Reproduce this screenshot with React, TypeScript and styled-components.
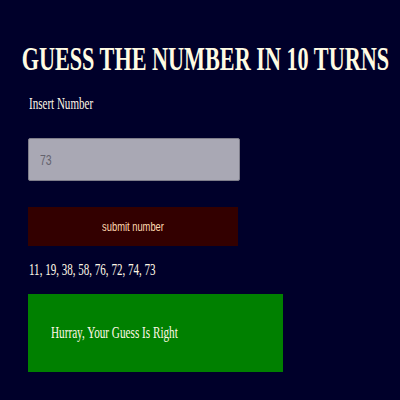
import React from 'react';
import styled, { createGlobalStyle } from 'styled-components';

const GlobalStyle = createGlobalStyle`
  html, body {
    margin: 0;
    padding: 0;
    background: #00002a;
  }
  body {
    font-family: "Liberation Serif", "Times New Roman", serif;
    color: #fff8e6;
  }
`;

const Page = styled.div`
  width: 400px;
  height: 400px;
  box-sizing: border-box;
  padding: 44px 0 0 28px;
  display: flex;
  flex-direction: column;
  overflow: hidden;
`;

// the page is drawn horizontally squeezed, so text is narrowed with scaleX
const Squeeze = styled.span<{ $x: number; $origin?: string }>`
  display: inline-block;
  flex: none;
  white-space: nowrap;
  transform: scaleX(${p => p.$x});
  transform-origin: ${p => p.$origin || 'left'} center;
`;

const Title = styled.h1`
  margin: 0 0 0 -23px;
  width: 400px;
  display: flex;
  justify-content: center;
  font-size: 34px;
  line-height: 30px;
  font-weight: bold;
  color: #fffbe3;
`;

const Label = styled.div`
  margin-top: 21px;
  font-size: 16px;
  line-height: 18px;
  padding-left: 1px;
`;

const Input = styled.div`
  margin-top: 25px;
  width: 212px;
  height: 43px;
  box-sizing: border-box;
  background: #a9a8b4;
  border: 1px solid #7e7d8a;
  border-radius: 2px;
  padding-left: 11px;
  display: flex;
  align-items: center;
  font-family: "Liberation Sans", Arial, sans-serif;
  font-size: 14px;
  color: #64636e;
`;

const Button = styled.div`
  margin-top: 26px;
  width: 210px;
  height: 39px;
  background: #330000;
  display: flex;
  align-items: center;
  justify-content: center;
  font-family: "Liberation Sans", Arial, sans-serif;
  font-size: 13px;
  color: #ffd9b0;
`;

const Guesses = styled.div`
  margin-top: 15px;
  font-size: 16px;
  line-height: 18px;
  padding-left: 1px;
`;

const Result = styled.div<{ $ok: boolean }>`
  margin-top: 15px;
  width: 255px;
  height: 78px;
  box-sizing: border-box;
  background: ${p => (p.$ok ? '#008000' : '#800000')};
  padding-left: 23px;
  display: flex;
  align-items: center;
  font-size: 16px;
`;

const guesses = [11, 19, 38, 58, 76, 72, 74, 73];

export default function App() {
  return (
    <>
      <GlobalStyle />
      <Page>
        <Title>
          <Squeeze $x={0.653} $origin="center">GUESS THE NUMBER IN 10 TURNS</Squeeze>
        </Title>
        <Label>
          <Squeeze $x={0.69}>Insert Number</Squeeze>
        </Label>
        <Input>
          <Squeeze $x={0.75}>73</Squeeze>
        </Input>
        <Button>
          <Squeeze $x={0.72} $origin="center">submit number</Squeeze>
        </Button>
        <Guesses>
          <Squeeze $x={0.69}>{guesses.join(', ')}</Squeeze>
        </Guesses>
        <Result $ok>
          <Squeeze $x={0.7}>Hurray, Your Guess Is Right</Squeeze>
        </Result>
      </Page>
    </>
  );
}
